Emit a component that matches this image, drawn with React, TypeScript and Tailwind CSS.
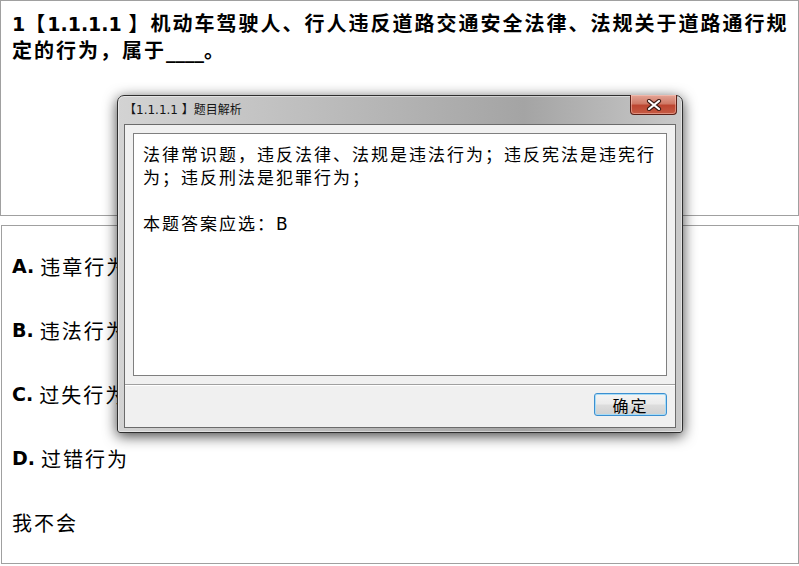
import React from "react";

const latin = "font-['DejaVu_Sans','Noto_Sans_CJK_SC',sans-serif]";

function CloseIcon() {
  return (
    <svg width="16" height="12" viewBox="0 0 16 12">
      <path d="M3 2 L13 10 M13 2 L3 10" stroke="#3b1a14" strokeWidth="4.2" strokeLinecap="round" />
      <path d="M3 2 L13 10 M13 2 L3 10" stroke="#ffffff" strokeWidth="2.2" strokeLinecap="round" />
    </svg>
  );
}

function Option({ label, text }: { label: string; text: string }) {
  return (
    <div className="h-[25px] flex items-center">
      <span className={`${latin} font-bold text-[19px] leading-[25px]`}>{label}</span>
      <span className="pl-[6px] text-[20px] leading-[25px] tracking-[2px]">{text}</span>
    </div>
  );
}

function Dialog() {
  return (
    <div className="absolute left-[117px] top-[95px] w-[566px] h-[338px] flex flex-col rounded-t-[7px] rounded-b-[3px] border border-[#2f2f2f] bg-[linear-gradient(90deg,#d3d3d3_0%,#bdbdbd_35%,#a4a4a4_72%,#c9c9c9_100%)] shadow-[0_3px_14px_rgba(0,0,0,0.75),inset_0_0_0_1px_rgba(255,255,255,0.45)]">
      <div className="h-[28px] flex items-center pl-[6px] text-[12px] text-[#151515] font-['DejaVu_Sans','Noto_Sans_CJK_SC',sans-serif]">
        <span>【1.1.1.1 】题目解析</span>
      </div>
      <div className="absolute right-[5px] top-[-1px] w-[47px] h-[20px] flex items-center justify-center rounded-b-[4px] border border-t-0 border-[#5a2018] bg-[linear-gradient(180deg,#e4a597_0%,#d07a67_45%,#bd4631_55%,#c65b45_100%)] shadow-[inset_0_0_0_1px_rgba(255,210,200,0.45)]">
        <CloseIcon />
      </div>
      <div className="flex-1 mx-[6px] mb-[4px] flex flex-col border border-[#6b6b6b] bg-[#f0f0f0]">
        <div className="mx-[8px] mt-[8px] h-[243px] border border-[#7f7f7f] bg-white pl-[9px] pt-[8px] text-[17px] leading-[23px] tracking-[2px] text-black">
          <div>法律常识题，违反法律、法规是违法行为；违反宪法是违宪行</div>
          <div>为；违反刑法是犯罪行为；</div>
          <div className="h-[23px]" />
          <div>
            本题答案应选：<span className="font-['DejaVu_Sans',sans-serif] tracking-normal">B</span>
          </div>
        </div>
        <div className="mt-[8px] border-t border-[#a0a0a0] shadow-[inset_0_1px_0_#ffffff] flex justify-end pr-[8px] pt-[8px]">
          <div className="w-[73px] h-[23px] flex items-center justify-center rounded-[3px] border border-[#3c8fd0] bg-[linear-gradient(180deg,#f4f4f4_0%,#ebebeb_48%,#dddddd_52%,#d0d0d0_100%)] shadow-[inset_0_0_0_1px_#a8dcf6] text-[16px] tracking-[2px] text-black">
            确定
          </div>
        </div>
      </div>
    </div>
  );
}

export default function App() {
  return (
    <div className="relative w-[799px] h-[566px] bg-white overflow-hidden text-black font-['Noto_Sans_CJK_SC',sans-serif]">
      <div className="h-[216px] border border-[#a0a0a0] pl-[11px] pt-[9px]">
        <p className="text-[20px] leading-[25px] font-bold tracking-[2px]">
          <span className={`${latin} text-[19px] tracking-normal`}>1</span>【
          <span className={`${latin} text-[19px] tracking-normal`}>1.1.1.1 </span>】机动车驾驶人、行人违反道路交通安全法律、法规关于道路通行规定的行为，属于
          <span className={`${latin} text-[19px] tracking-normal`}>____</span>。
        </p>
      </div>
      <div className="mt-[9px] ml-[1px] h-[339px] border border-[#a0a0a0] pl-[10px] pt-[28px] flex flex-col gap-[39px]">
        <Option label="A." text="违章行为" />
        <Option label="B." text="违法行为" />
        <Option label="C." text="过失行为" />
        <Option label="D." text="过错行为" />
        <div className="h-[25px] text-[20px] leading-[25px] tracking-[2px]">我不会</div>
      </div>
      <Dialog />
    </div>
  );
}
